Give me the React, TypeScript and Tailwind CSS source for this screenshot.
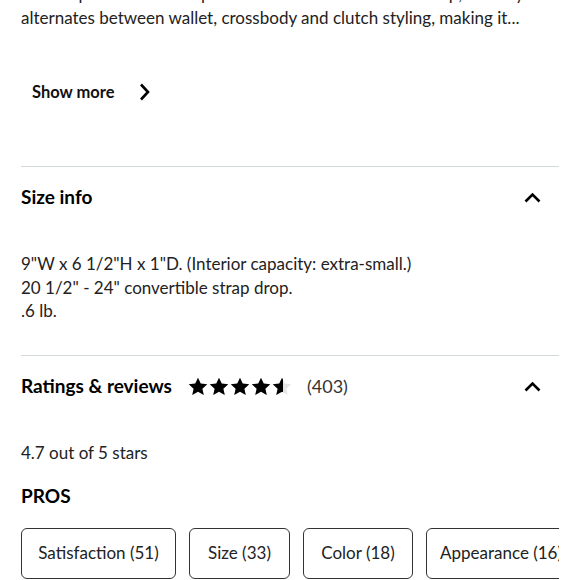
import React from "react";

const Star = ({ fill = 1 }: { fill?: number }) => (
  <svg width="20" height="19" viewBox="0 0 24 23" className="shrink-0">
    <defs>
      <clipPath id={`half${fill}`}>
        <rect x="0" y="0" width={24 * fill} height="23" />
      </clipPath>
    </defs>
    <path
      d="M12 0.8l3.3 7.2 7.9 0.8-5.9 5.3 1.7 7.8L12 17.9l-7 4 1.7-7.8L0.8 8.8l7.9-0.8z"
      fill="#e6e6e6"
    />
    <path
      d="M12 0.8l3.3 7.2 7.9 0.8-5.9 5.3 1.7 7.8L12 17.9l-7 4 1.7-7.8L0.8 8.8l7.9-0.8z"
      fill="#000"
      clipPath={`url(#half${fill})`}
    />
  </svg>
);

const ChevronUp = () => (
  <svg width="17" height="11" viewBox="0 0 17 11" className="shrink-0">
    <path d="M1.5 9.5L8.5 2.5l7 7" fill="none" stroke="#000" strokeWidth="2.6" />
  </svg>
);

const ChevronRight = () => (
  <svg width="11" height="18" viewBox="0 0 11 18">
    <path d="M2 1.5l7 7.5-7 7.5" fill="none" stroke="#000" strokeWidth="2.6" />
  </svg>
);

const chips = [
  { label: "Satisfaction (51)", w: "w-[155px]" },
  { label: "Size (33)", w: "w-[101px]" },
  { label: "Color (18)", w: "w-[110px]" },
  { label: "Appearance (16)", w: "w-[150px]" },
];

export default function App() {
  return (
    <div
      className="w-[580px] h-[580px] overflow-hidden bg-white text-[#222]"
      style={{ fontFamily: "Lato, 'Open Sans', sans-serif" }}
    >
      <div className="px-[21px]">
        <p className="mt-[-18px] text-[17px] leading-[24px] text-[#222] whitespace-nowrap">
          A sleek pebbled-leather piece with a removable chain strap, cleverly
          <br />
          alternates between wallet, crossbody and clutch styling, making it...
        </p>

        <div className="mt-[42px] h-[40px] ml-[11px] flex items-center gap-[24px]">
          <span className="text-[16.5px] font-bold text-[#111]">Show more</span>
          <ChevronRight />
        </div>

        <div className="mt-[54px] border-t border-[#d3d8d8]" />

        <div className="h-[61px] flex items-center justify-between">
          <span className="text-[19px] font-bold text-black">Size info</span>
          <span className="mr-[18px]">
            <ChevronUp />
          </span>
        </div>

        <div className="mt-[24px] text-[17px] leading-[23.5px] text-[#222]">
          <div>9"W x 6 1/2"H x 1"D. (Interior capacity: extra-small.)</div>
          <div>20 1/2" - 24" convertible strap drop.</div>
          <div>.6 lb.</div>
        </div>

        <div className="mt-[32px] border-t border-[#d3d8d8]" />

        <div className="h-[62px] flex items-center justify-between">
          <div className="flex items-center">
            <span className="text-[19px] font-bold text-black">Ratings &amp; reviews</span>
            <div className="ml-[16px] flex items-center gap-[1px]">
              <Star />
              <Star />
              <Star />
              <Star />
              <Star fill={0.55} />
            </div>
            <span className="ml-[15px] text-[18px] text-[#333]">(403)</span>
          </div>
          <span className="mr-[18px]">
            <ChevronUp />
          </span>
        </div>

        <div className="mt-[23px] text-[17px] leading-[24px] text-[#222]">4.7 out of 5 stars</div>

        <div className="mt-[19px] text-[19px] leading-[24px] font-bold text-black">PROS</div>

        <div className="mt-[20px] w-[538px] overflow-hidden flex gap-[13px]">
          {chips.map((c) => (
            <div
              key={c.label}
              className={`${c.w} h-[51px] shrink-0 rounded-[6px] border border-[#333] flex items-center justify-center text-[17px] text-[#222] whitespace-nowrap`}
            >
              {c.label}
            </div>
          ))}
        </div>
      </div>
    </div>
  );
}
